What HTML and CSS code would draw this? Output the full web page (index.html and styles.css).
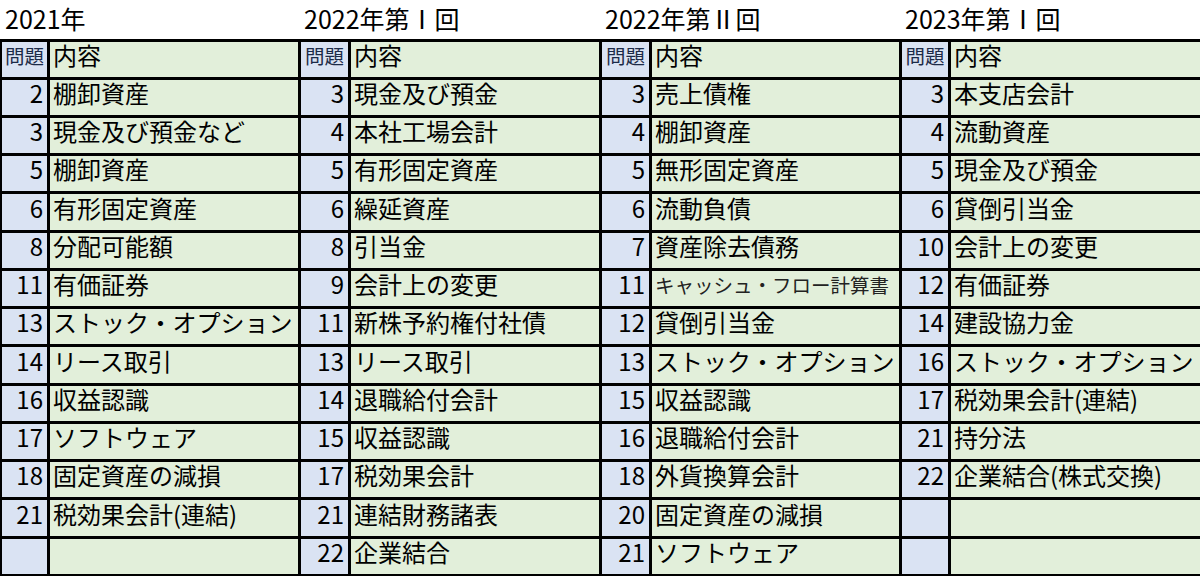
FILE: index.html
```html
<!DOCTYPE html>
<html lang="ja">
<head>
<meta charset="utf-8">
<title>出題論点一覧</title>
<link rel="stylesheet" href="styles.css">
</head>
<body>
<div class="sheet">
  <section class="block b1">
    <div class="title">2021年</div>
    <div class="grid">
      <div class="no head">問題</div><div class="item">内容</div>
      <div class="no">2</div><div class="item">棚卸資産</div>
      <div class="no">3</div><div class="item">現金及び預金など</div>
      <div class="no">5</div><div class="item">棚卸資産</div>
      <div class="no">6</div><div class="item">有形固定資産</div>
      <div class="no">8</div><div class="item">分配可能額</div>
      <div class="no">11</div><div class="item">有価証券</div>
      <div class="no">13</div><div class="item">ストック・オプション</div>
      <div class="no">14</div><div class="item">リース取引</div>
      <div class="no">16</div><div class="item">収益認識</div>
      <div class="no">17</div><div class="item">ソフトウェア</div>
      <div class="no">18</div><div class="item">固定資産の減損</div>
      <div class="no">21</div><div class="item">税効果会計(連結)</div>
      <div class="no"></div><div class="item"></div>
    </div>
  </section>
  <section class="block b2">
    <div class="title">2022年第Ⅰ回</div>
    <div class="grid">
      <div class="no head">問題</div><div class="item">内容</div>
      <div class="no">3</div><div class="item">現金及び預金</div>
      <div class="no">4</div><div class="item">本社工場会計</div>
      <div class="no">5</div><div class="item">有形固定資産</div>
      <div class="no">6</div><div class="item">繰延資産</div>
      <div class="no">8</div><div class="item">引当金</div>
      <div class="no">9</div><div class="item">会計上の変更</div>
      <div class="no">11</div><div class="item">新株予約権付社債</div>
      <div class="no">13</div><div class="item">リース取引</div>
      <div class="no">14</div><div class="item">退職給付会計</div>
      <div class="no">15</div><div class="item">収益認識</div>
      <div class="no">17</div><div class="item">税効果会計</div>
      <div class="no">21</div><div class="item">連結財務諸表</div>
      <div class="no">22</div><div class="item">企業結合</div>
    </div>
  </section>
  <section class="block b3">
    <div class="title">2022年第Ⅱ回</div>
    <div class="grid">
      <div class="no head">問題</div><div class="item">内容</div>
      <div class="no">3</div><div class="item">売上債権</div>
      <div class="no">4</div><div class="item">棚卸資産</div>
      <div class="no">5</div><div class="item">無形固定資産</div>
      <div class="no">6</div><div class="item">流動負債</div>
      <div class="no">7</div><div class="item">資産除去債務</div>
      <div class="no">11</div><div class="item small">キャッシュ・フロー計算書</div>
      <div class="no">12</div><div class="item">貸倒引当金</div>
      <div class="no">13</div><div class="item">ストック・オプション</div>
      <div class="no">15</div><div class="item">収益認識</div>
      <div class="no">16</div><div class="item">退職給付会計</div>
      <div class="no">18</div><div class="item">外貨換算会計</div>
      <div class="no">20</div><div class="item">固定資産の減損</div>
      <div class="no">21</div><div class="item">ソフトウェア</div>
    </div>
  </section>
  <section class="block b4">
    <div class="title">2023年第Ⅰ回</div>
    <div class="grid">
      <div class="no head">問題</div><div class="item">内容</div>
      <div class="no">3</div><div class="item">本支店会計</div>
      <div class="no">4</div><div class="item">流動資産</div>
      <div class="no">5</div><div class="item">現金及び預金</div>
      <div class="no">6</div><div class="item">貸倒引当金</div>
      <div class="no">10</div><div class="item">会計上の変更</div>
      <div class="no">12</div><div class="item">有価証券</div>
      <div class="no">14</div><div class="item">建設協力金</div>
      <div class="no">16</div><div class="item">ストック・オプション</div>
      <div class="no">17</div><div class="item">税効果会計(連結)</div>
      <div class="no">21</div><div class="item">持分法</div>
      <div class="no">22</div><div class="item">企業結合(株式交換)</div>
      <div class="no"></div><div class="item"></div>
      <div class="no"></div><div class="item"></div>
    </div>
  </section>
</div>
</body>
</html>
```
FILE: styles.css
```css
html, body {
  margin: 0;
  padding: 0;
  background: #ffffff;
}

body {
  width: 1200px;
  height: 576px;
  overflow: hidden;
  font-family: "Noto Sans CJK JP", "Noto Sans", sans-serif;
  color: #000;
}

.sheet {
  display: flex;
  margin-left: -1px;
}

.block {
  display: flex;
  flex-direction: column;
  flex: none;
}

.title {
  box-sizing: border-box;
  height: 39px;
  padding: 0 0 0 6px;
  font-size: 25px;
  line-height: normal;
  white-space: nowrap;
}

.grid {
  display: grid;
  background: #000;
  padding: 3px 0 3px 3px;
  column-gap: 3px;
  row-gap: 3px;
  grid-template-rows: 35px 35px 35px 35px 36px 35px 35px 35px 36px 35px 35px 35px 36px 35px;
}

.b1 .grid { grid-template-columns: 45px 248px; }
.b2 .grid { grid-template-columns: 47px 248px; }
.b3 .grid { grid-template-columns: 47px 247px; }
.b4 .grid { grid-template-columns: 46px 252px; }

.no,
.item {
  display: flex;
  align-items: center;
  box-sizing: border-box;
  padding-bottom: 9px;
  font-size: 24px;
  line-height: 24px;
  white-space: nowrap;
}

.no {
  background: #dae3f3;
  justify-content: flex-end;
  padding-right: 4px;
}

.no.head {
  justify-content: center;
  padding-right: 0;
  padding-bottom: 7px;
  font-size: 19.5px;
  color: #1c2a48;
}

.item {
  background: #e2efda;
  padding-left: 3px;
}

.item.small {
  font-size: 19.5px;
  color: #222;
  padding-bottom: 7px;
}
```
